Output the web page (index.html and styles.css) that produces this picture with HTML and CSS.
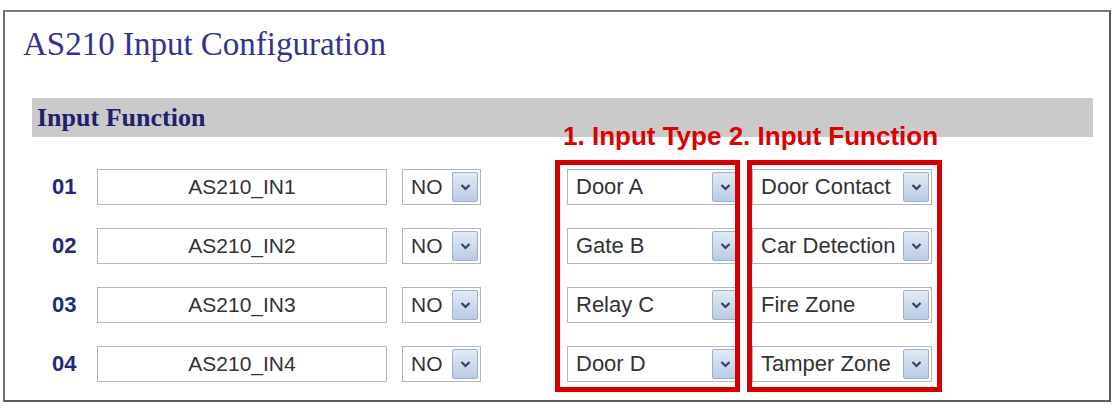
FILE: index.html
```html
<!DOCTYPE html>
<html lang="en">
<head>
    <meta charset="UTF-8">
    <meta name="viewport" content="width=device-width, initial-scale=1.0">
    <title>AS210 Input Configuration</title>
    <link rel="stylesheet" href="styles.css">
</head>
<body>
    <div class="panel">
        <h1 class="title">AS210 Input Configuration</h1>

        <div class="section-bar">Input Function</div>

        <div class="inputs">
            <div class="inputs-left">
                <div class="in-row">
                    <span class="in-no">01</span>
                    <input type="text" class="in-name" value="AS210_IN1" readonly>
                    <div class="combo combo-nc"><span>NO</span><i class="combo-btn"><svg viewBox="0 0 11 8"><path d="M1.5 2 L5.5 6 L9.5 2"/></svg></i></div>
                </div>
                <div class="in-row">
                    <span class="in-no">02</span>
                    <input type="text" class="in-name" value="AS210_IN2" readonly>
                    <div class="combo combo-nc"><span>NO</span><i class="combo-btn"><svg viewBox="0 0 11 8"><path d="M1.5 2 L5.5 6 L9.5 2"/></svg></i></div>
                </div>
                <div class="in-row">
                    <span class="in-no">03</span>
                    <input type="text" class="in-name" value="AS210_IN3" readonly>
                    <div class="combo combo-nc"><span>NO</span><i class="combo-btn"><svg viewBox="0 0 11 8"><path d="M1.5 2 L5.5 6 L9.5 2"/></svg></i></div>
                </div>
                <div class="in-row">
                    <span class="in-no">04</span>
                    <input type="text" class="in-name" value="AS210_IN4" readonly>
                    <div class="combo combo-nc"><span>NO</span><i class="combo-btn"><svg viewBox="0 0 11 8"><path d="M1.5 2 L5.5 6 L9.5 2"/></svg></i></div>
                </div>
            </div>

            <div class="inputs-right">
                <div class="note">1. Input Type 2. Input Function</div>
                <div class="marks">
                    <div class="mark mark-type">
                        <div class="combo combo-type"><span>Door A</span><i class="combo-btn"><svg viewBox="0 0 11 8"><path d="M1.5 2 L5.5 6 L9.5 2"/></svg></i></div>
                        <div class="combo combo-type"><span>Gate B</span><i class="combo-btn"><svg viewBox="0 0 11 8"><path d="M1.5 2 L5.5 6 L9.5 2"/></svg></i></div>
                        <div class="combo combo-type"><span>Relay C</span><i class="combo-btn"><svg viewBox="0 0 11 8"><path d="M1.5 2 L5.5 6 L9.5 2"/></svg></i></div>
                        <div class="combo combo-type"><span>Door D</span><i class="combo-btn"><svg viewBox="0 0 11 8"><path d="M1.5 2 L5.5 6 L9.5 2"/></svg></i></div>
                    </div>
                    <div class="mark mark-func">
                        <div class="combo combo-func"><span>Door Contact</span><i class="combo-btn"><svg viewBox="0 0 11 8"><path d="M1.5 2 L5.5 6 L9.5 2"/></svg></i></div>
                        <div class="combo combo-func"><span>Car Detection</span><i class="combo-btn"><svg viewBox="0 0 11 8"><path d="M1.5 2 L5.5 6 L9.5 2"/></svg></i></div>
                        <div class="combo combo-func"><span>Fire Zone</span><i class="combo-btn"><svg viewBox="0 0 11 8"><path d="M1.5 2 L5.5 6 L9.5 2"/></svg></i></div>
                        <div class="combo combo-func"><span>Tamper Zone</span><i class="combo-btn"><svg viewBox="0 0 11 8"><path d="M1.5 2 L5.5 6 L9.5 2"/></svg></i></div>
                    </div>
                </div>
            </div>
        </div>
    </div>
</body>
</html>
```

FILE: styles.css
```css
body {
    margin: 0;
    background: #fff;
    font-family: "Liberation Sans", Arial, sans-serif;
}
.panel {
    width: 1104px;
    margin: 10px 0 0 3px;
    border: 2px solid #5c5c5c;
    border-top-color: #7c7c7c;
    border-left-color: #6c6c6c;
    padding-bottom: 8px;
}
.title {
    margin: 14px 0 0 18px;
    font-family: "Liberation Serif", "Times New Roman", serif;
    font-size: 33px;
    font-weight: normal;
    line-height: 36px;
    color: #33348f;
}
.section-bar {
    height: 39px;
    box-sizing: border-box;
    margin: 36px 16px 0 27px;
    padding: 4px 0 0 5px;
    background: #cacaca;
    font-family: "Liberation Serif", "Times New Roman", serif;
    font-size: 26px;
    font-weight: bold;
    line-height: 32px;
    color: #20206e;
}
.inputs {
    display: flex;
    align-items: flex-start;
}
.inputs-left {
    display: flex;
    flex-direction: column;
    gap: 23px;
    width: 429px;
    padding: 32px 0 0 47px;
}
.in-row {
    display: flex;
    align-items: center;
    height: 36px;
}
.in-no {
    flex: none;
    width: 45px;
    font-size: 22px;
    font-weight: bold;
    color: #1e2a7c;
}
.in-name {
    flex: none;
    width: 290px;
    height: 36px;
    box-sizing: border-box;
    margin: 0;
    padding: 0;
    border: 1px solid #b6b6b6;
    font-family: "Liberation Sans", Arial, sans-serif;
    font-size: 21px;
    color: #333;
    text-align: center;
    outline: none;
}
.combo {
    flex: none;
    display: flex;
    align-items: center;
    height: 36px;
    box-sizing: border-box;
    padding-left: 8px;
    border: 1px solid #b2b5ba;
    background: #fff;
    font-size: 22px;
    color: #333;
    white-space: nowrap;
}
.combo-btn {
    display: flex;
    align-items: center;
    justify-content: center;
    width: 26px;
    height: 30px;
    box-sizing: border-box;
    margin: 0 2px 0 auto;
    border: 1px solid #9fb1ca;
    border-radius: 2px;
    background: linear-gradient(#e2eaf5, #b9cbe4);
}
.combo-btn svg {
    width: 11px;
    height: 8px;
    fill: none;
    stroke: #33425f;
    stroke-width: 2.2;
}
.combo-nc {
    width: 79px;
    margin-left: 15px;
    font-size: 21px;
}
.inputs-right {
    display: flex;
    flex-direction: column;
    margin-left: 74px;
}
/* caption sits partly over the grey bar */
.note {
    margin: -15px 0 9px 8px;
    font-size: 26px;
    font-weight: bold;
    line-height: 29px;
    color: #dc0000;
    white-space: nowrap;
}
.marks {
    display: flex;
    gap: 7px;
}
.mark {
    display: flex;
    flex-direction: column;
    gap: 23px;
    border: 5px solid #d60000;
}
.mark-type {
    width: 168px;
    padding: 4px 0 5px 7px;
    overflow: hidden;
}
.mark-func {
    width: 180px;
    padding: 4px 5px 5px 0;
}
.combo-type {
    width: 174px;
}
.combo-func {
    width: 180px;
}
```
